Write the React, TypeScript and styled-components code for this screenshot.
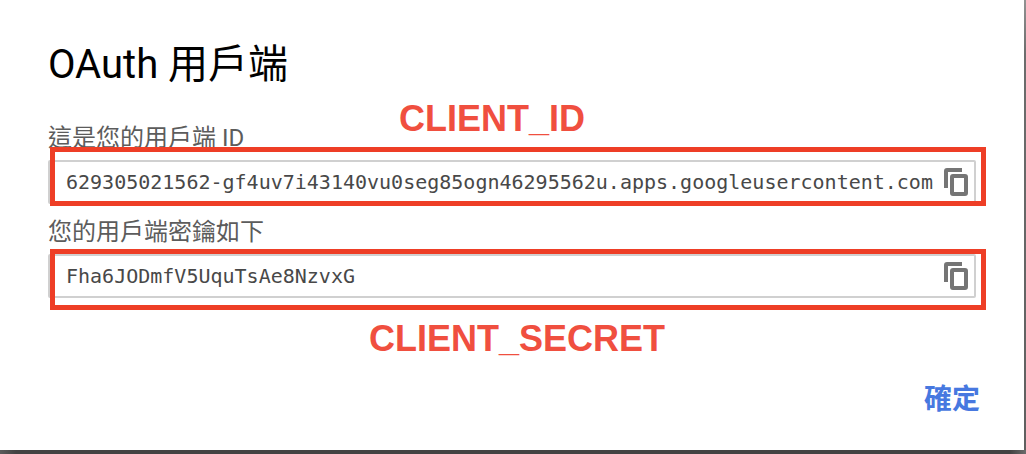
import React from "react";
import styled, { createGlobalStyle } from "styled-components";

const GlobalStyle = createGlobalStyle`
  * { box-sizing: border-box; }
  body { margin: 0; }
`;

const Backdrop = styled.main`
  display: flex;
  min-height: 100vh;
  padding: 0 2px 4px 0;
  background:
    linear-gradient(90deg, #5c5c5c, #434343 16px, #434343 calc(100% - 16px), #6b6b6b) bottom / 100% 4px no-repeat,
    linear-gradient(#929292, #6c6c6c 12%, #5f5f5f);
  font-family: Roboto, "Noto Sans CJK TC", sans-serif;
`;

const Dialog = styled.section`
  flex: 1;
  display: flex;
  flex-direction: column;
  padding: 41px 48px 30px;
  background: #fff;
`;

const Title = styled.h1`
  margin: 0 0 22px;
  font-size: 40px;
  line-height: 48px;
  font-weight: 400;
  color: #000;
`;

const Field = styled.div`
  display: flex;
  flex-direction: column;
  gap: 7px;
  padding-top: 12px;

  & + & {
    padding-top: 13px;
  }
`;

const Label = styled.label`
  font-size: 24px;
  line-height: 30px;
  font-weight: 400;
  color: #5c5c5c;
`;

const ValueBox = styled.div`
  position: relative;
  display: flex;
  align-items: center;
  gap: 4px;
  height: 44px;
  padding: 0 6px 0 16px;
  border: 2px solid #d0d0d0;
  border-radius: 2px;
`;

const Value = styled.input`
  flex: 1;
  min-width: 0;
  padding: 0;
  border: 0;
  outline: 0;
  background: none;
  font-family: "DejaVu Sans Mono", monospace;
  font-size: 20px;
  line-height: 28px;
  color: #484848;
`;

const CopyButton = styled.button`
  display: flex;
  padding: 0;
  border: 0;
  background: none;
  color: #757575;
  cursor: pointer;
`;

const Highlight = styled.span<{ $top: number; $bottom: number }>`
  position: absolute;
  top: ${(p) => p.$top}px;
  right: -12px;
  bottom: ${(p) => p.$bottom}px;
  left: 0;
  border: 5px solid #ee3e26;
  pointer-events: none;
`;

const Note = styled.strong<{ $place: "above" | "below" }>`
  position: absolute;
  ${(p) => (p.$place === "above" ? "bottom: 100%; left: 349px;" : "top: 100%; left: 319px;")}
  margin: 23px 0;
  font-family: "Liberation Sans", Arial, sans-serif;
  font-size: 36px;
  line-height: 40px;
  font-weight: 700;
  color: #f04f3f;
  pointer-events: none;
`;

const Actions = styled.footer`
  display: flex;
  justify-content: flex-end;
  margin: auto -4px 0 0;
`;

const ConfirmButton = styled.button`
  padding: 0;
  border: 0;
  background: none;
  font-family: inherit;
  font-size: 28px;
  line-height: 40px;
  font-weight: 700;
  color: #4778e0;
  cursor: pointer;
`;

const CopyIcon = () => (
  <svg width="24" height="28" viewBox="0 0 24 28" fill="none" stroke="currentColor" strokeWidth="4" aria-hidden="true">
    <path d="M2 20V3a1 1 0 0 1 1-1h15" />
    <rect x="8" y="8" width="14" height="18" rx="1" />
  </svg>
);

type CredentialProps = {
  id: string;
  label: string;
  value: string;
  note: string;
  place: "above" | "below";
  top: number;
  bottom: number;
};

const Credential = ({ id, label, value, note, place, top, bottom }: CredentialProps) => (
  <Field>
    <Label htmlFor={id}>{label}</Label>
    <ValueBox>
      <Value id={id} value={value} readOnly spellCheck={false} />
      <CopyButton type="button" aria-label="複製">
        <CopyIcon />
      </CopyButton>
      <Highlight $top={top} $bottom={bottom} />
      <Note $place={place}>{note}</Note>
    </ValueBox>
  </Field>
);

export default function App() {
  return (
    <>
      <GlobalStyle />
      <Backdrop>
        <Dialog role="dialog" aria-labelledby="dialog-title" lang="zh-Hant">
          <Title id="dialog-title">OAuth 用戶端</Title>
          <Credential
            id="client-id"
            label="這是您的用戶端 ID"
            value="629305021562-gf4uv7i43140vu0seg85ogn46295562u.apps.googleusercontent.com"
            note="CLIENT_ID"
            place="above"
            top={-15}
            bottom={-4}
          />
          <Credential
            id="client-secret"
            label="您的用戶端密鑰如下"
            value="Fha6JODmfV5UquTsAe8NzvxG"
            note="CLIENT_SECRET"
            place="below"
            top={-7}
            bottom={-14}
          />
          <Actions>
            <ConfirmButton type="button">確定</ConfirmButton>
          </Actions>
        </Dialog>
      </Backdrop>
    </>
  );
}
